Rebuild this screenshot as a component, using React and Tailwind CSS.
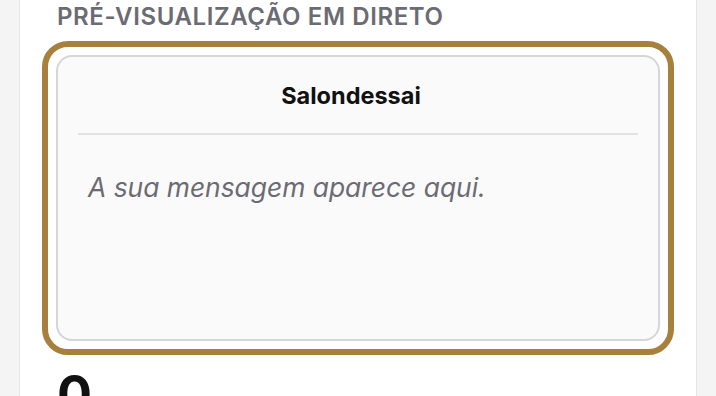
export default function App() {
  return (
    <div
      className="min-h-screen bg-[#f4f4f4] px-[19px]"
      style={{ fontFamily: "Inter, 'Noto Sans', sans-serif" }}
    >
      <div className="h-[396px] overflow-hidden border-x border-[#e6e6e6] bg-white px-[22px] pt-[2px]">
        <h2 className="px-[15px] text-[24px] font-semibold uppercase leading-[30px] tracking-wide text-[#6b6b73]">
          Pré-visualização em direto
        </h2>

        <div className="mt-[9px] rounded-[26px] border-[6px] border-[#a8803d] p-2">
          <div className="h-[286px] rounded-2xl border-2 border-[#d6d6d6] bg-[#fafafa] px-5">
            <div className="border-b-2 border-[#e3e3e3] pb-[22px] pr-[14px] pt-6 text-center text-[23.5px] font-bold leading-[30px] text-[#111111]">
              Salondessai
            </div>
            <p className="mt-[35px] px-[10px] text-[26.4px] italic leading-[34px] text-[#6b6b73]">
              A sua mensagem aparece aqui.
            </p>
          </div>
        </div>

        <div className="mt-[14px] px-[15px] text-[52px] font-bold leading-[52px] text-[#111111]">
          0
        </div>
      </div>
    </div>
  );
}
